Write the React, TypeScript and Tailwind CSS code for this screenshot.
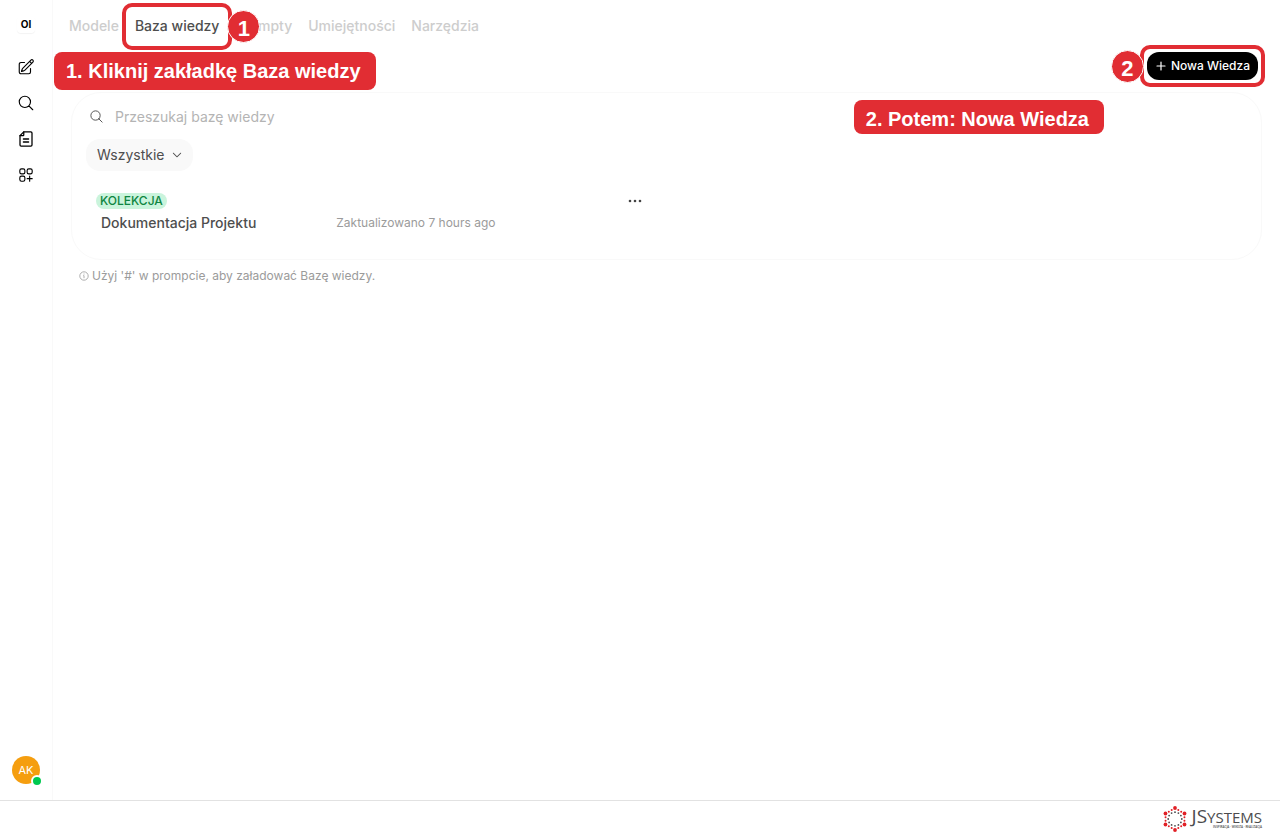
import type { ReactNode } from "react";
import {
  HiChevronDown,
  HiOutlineMagnifyingGlass,
  HiOutlinePencilSquare,
  HiOutlineSquaresPlus,
} from "react-icons/hi2";

interface Tab {
  name: string;
  active?: boolean;
}

interface Collection {
  name: string;
  updated: string;
}

const tabs: Tab[] = [
  { name: "Modele" },
  { name: "Baza wiedzy", active: true },
  { name: "Prompty" },
  { name: "Umiejętności" },
  { name: "Narzędzia" },
];

const collections: Collection[] = [
  { name: "Dokumentacja Projektu", updated: "Zaktualizowano 7 hours ago" },
];

function NoteIcon() {
  return (
    <svg
      className="size-[18px]"
      viewBox="0 0 24 24"
      fill="none"
      stroke="currentColor"
      strokeWidth="1.7"
      strokeLinecap="round"
      strokeLinejoin="round"
      aria-hidden="true"
    >
      <path d="M9 2.5h9.5a1.5 1.5 0 0 1 1.5 1.5v16a1.5 1.5 0 0 1-1.5 1.5h-13A1.5 1.5 0 0 1 4 20V7.5l5-5Z" />
      <path d="M9 2.5v4.2a.8.8 0 0 1-.8.8H4M8.5 12h7M8.5 16h7" />
    </svg>
  );
}

function SidebarButton({
  label,
  children,
}: {
  label: string;
  children: ReactNode;
}) {
  return (
    <button
      aria-label={label}
      className="flex size-9 items-center justify-center rounded-xl hover:bg-gray-100"
    >
      {children}
    </button>
  );
}

function Sidebar() {
  return (
    <aside className="flex w-[53px] shrink-0 flex-col items-center justify-between border-r border-[#f9f9f9] pt-4 pb-4 text-black">
      <div className="flex flex-col items-center">
        <div className="mb-4 flex h-[17px] w-[18px] items-center justify-center rounded-sm text-[10px] font-bold shadow-[0_1px_1px_#f3f3f3]">
          OI
        </div>
        <SidebarButton label="Nowy czat">
          <HiOutlinePencilSquare className="size-[18px]" />
        </SidebarButton>
        <SidebarButton label="Szukaj">
          <HiOutlineMagnifyingGlass className="size-[18px]" />
        </SidebarButton>
        <SidebarButton label="Notatki">
          <NoteIcon />
        </SidebarButton>
        <SidebarButton label="Obszar roboczy">
          <HiOutlineSquaresPlus className="size-[18px]" />
        </SidebarButton>
      </div>
      <button
        aria-label="Konto"
        className="relative flex size-7 items-center justify-center rounded-full bg-[#f59e0f] text-[11px] text-white"
      >
        AK
        <span className="absolute -right-[3px] -bottom-[3px] size-3 rounded-full border-2 border-white bg-[#00c950]" />
      </button>
    </aside>
  );
}

// Numbered marker next to a highlighted control
function StepMarker({ step }: { step: number }) {
  return (
    <span className="flex size-[33px] items-center justify-center rounded-full border border-white bg-[#e12d33] pt-1 font-['Liberation_Sans',sans-serif] text-[22px] leading-none font-bold text-white">
      {step}
    </span>
  );
}

function StepLabel({
  className,
  children,
}: {
  className: string;
  children: ReactNode;
}) {
  return (
    <span
      className={`block rounded-lg bg-[#e12d33] pt-1 pl-3 font-['Liberation_Sans',sans-serif] text-[20px] font-bold whitespace-nowrap text-white ${className}`}
    >
      {children}
    </span>
  );
}

function TabBar() {
  return (
    <nav className="flex h-[52px] items-center gap-4 pl-4 text-sm font-medium">
      {tabs.map((tab) => (
        <div key={tab.name} className="relative">
          <a
            href="#"
            className={tab.active ? "text-[#4e4e4e]" : "text-[#cdcdcd]"}
          >
            {tab.name}
          </a>
          {tab.active && (
            <>
              <span className="pointer-events-none absolute -inset-x-[13px] -top-[13px] -bottom-[14px] z-10 rounded-[10px] border-4 border-[#e12d33]" />
              <div className="absolute -top-[6px] -right-[41px] z-20">
                <StepMarker step={1} />
              </div>
            </>
          )}
        </div>
      ))}
    </nav>
  );
}

function CollectionItem({ item }: { item: Collection }) {
  return (
    <div className="pr-5 pl-2.5">
      <div className="flex h-4 items-center justify-between">
        <span className="rounded-full bg-[#caf4dc] px-1 text-xs leading-4 font-medium text-[#0f8541]">
          KOLEKCJA
        </span>
        <button
          aria-label="Więcej"
          className="flex h-4 w-6 items-center justify-center text-[#444444]"
        >
          <svg className="w-[14px]" viewBox="0 0 14 4" fill="currentColor">
            <circle cx="2" cy="2" r="1.3" />
            <circle cx="7" cy="2" r="1.3" />
            <circle cx="12" cy="2" r="1.3" />
          </svg>
        </button>
      </div>
      <div className="mt-1 flex items-center gap-20 pl-[5px]">
        <div className="text-sm font-medium text-[#4e4e4e]">{item.name}</div>
        <div className="text-xs text-[#9b9b9b]">{item.updated}</div>
      </div>
    </div>
  );
}

function KnowledgeCard() {
  return (
    <section className="rounded-[30px] border border-[#f9f9f9] px-3.5 pt-[11px] pb-[26px]">
      <label className="flex items-center pl-[3px]">
        <HiOutlineMagnifyingGlass className="size-[15px] text-[#4e4e4e]" />
        <input
          type="text"
          aria-label="Przeszukaj bazę wiedzy"
          placeholder="Przeszukaj bazę wiedzy"
          className="ml-[11px] h-6 flex-1 text-sm outline-none placeholder:text-[#b4b4b4]"
        />
      </label>
      <div className="relative mt-[11px] w-[107px] text-[#4e4e4e]">
        <select
          aria-label="Widok"
          className="h-8 w-full appearance-none rounded-[14px] bg-[#f9f9f9] pl-[11px] text-sm outline-none"
        >
          <option>Wszystkie</option>
        </select>
        <HiChevronDown className="pointer-events-none absolute top-[10px] right-2.5 size-3" />
      </div>
      <div className="mt-[22px] grid grid-cols-2">
        {collections.map((item) => (
          <CollectionItem key={item.name} item={item} />
        ))}
      </div>
    </section>
  );
}

function LogoMark() {
  const dots = Array.from({ length: 18 }, (_, i) => ({
    angle: (i * Math.PI) / 9 - Math.PI / 2,
    big: i % 3 === 0,
  }));
  return (
    <svg className="size-[26px]" viewBox="-13 -13 26 26" aria-hidden="true">
      {dots.map(({ angle, big }) => (
        <circle
          key={angle}
          cx={Math.cos(angle) * (big ? 11 : 9.6)}
          cy={Math.sin(angle) * (big ? 11 : 9.6)}
          r={big ? 1.9 : 1}
          fill="#e12026"
        />
      ))}
      {Array.from({ length: 12 }, (_, i) => (i * Math.PI) / 6).map((angle) => (
        <circle
          key={angle}
          cx={Math.cos(angle) * 6.8}
          cy={Math.sin(angle) * 6.8}
          r="0.9"
          fill="#4b4b4d"
        />
      ))}
    </svg>
  );
}

function Footer() {
  return (
    <footer className="flex h-9 items-center justify-end gap-1 border-t border-[#e2e2e2] pr-[18px]">
      <LogoMark />
      <div className="font-['Open_Sans',sans-serif] text-[#4b4b4d]">
        <div className="text-[19px] leading-4 font-medium">
          JS<span className="text-[15px]">YSTEMS</span>
        </div>
        <div className="text-right text-[3px] leading-1 font-semibold">
          INSPIRACJA · WIEDZA · REALIZACJA
        </div>
      </div>
    </footer>
  );
}

export default function App() {
  return (
    <div className="flex min-h-screen flex-col bg-white font-[Inter,sans-serif]">
      <div className="flex flex-1">
        <Sidebar />
        <main className="relative min-w-0 flex-1">
          <TabBar />
          <div className="absolute top-[52px] left-px z-10">
            <StepLabel className="pr-[15px] pb-1 leading-[30px]">
              1. Kliknij zakładkę Baza wiedzy
            </StepLabel>
          </div>
          <div className="px-[18px]">
            <div className="mb-3 flex justify-end pr-1">
              <div className="relative">
                <button className="flex h-7 items-center gap-1 rounded-xl bg-black px-2 text-xs font-medium text-white">
                  <svg
                    className="size-3"
                    viewBox="0 0 12 12"
                    stroke="currentColor"
                    strokeWidth="1.2"
                    strokeLinecap="round"
                  >
                    <path d="M6 2v8M2 6h8" />
                  </svg>
                  Nowa Wiedza
                </button>
                <span className="pointer-events-none absolute -inset-[7px] z-10 rounded-[10px] border-4 border-[#e12d33]" />
                <div className="absolute -top-[2px] -left-9 z-20">
                  <StepMarker step={2} />
                </div>
              </div>
            </div>
            <div className="relative">
              <KnowledgeCard />
              <div className="absolute top-2 right-[158px]">
                <StepLabel className="pr-[15px] leading-[30px]">
                  2. Potem: Nowa Wiedza
                </StepLabel>
              </div>
            </div>
            <div className="mt-2 flex items-center gap-[3px] pl-2 text-xs text-[#9b9b9b]">
              <svg
                className="size-2.5"
                viewBox="0 0 10 10"
                fill="none"
                stroke="currentColor"
                strokeWidth="0.8"
              >
                <circle cx="5" cy="5" r="4.2" />
                <path d="M4.3 4.6H5v2.6M5 2.6v.9" />
              </svg>
              Użyj '#' w prompcie, aby załadować Bazę wiedzy.
            </div>
          </div>
        </main>
      </div>
      <Footer />
    </div>
  );
}
